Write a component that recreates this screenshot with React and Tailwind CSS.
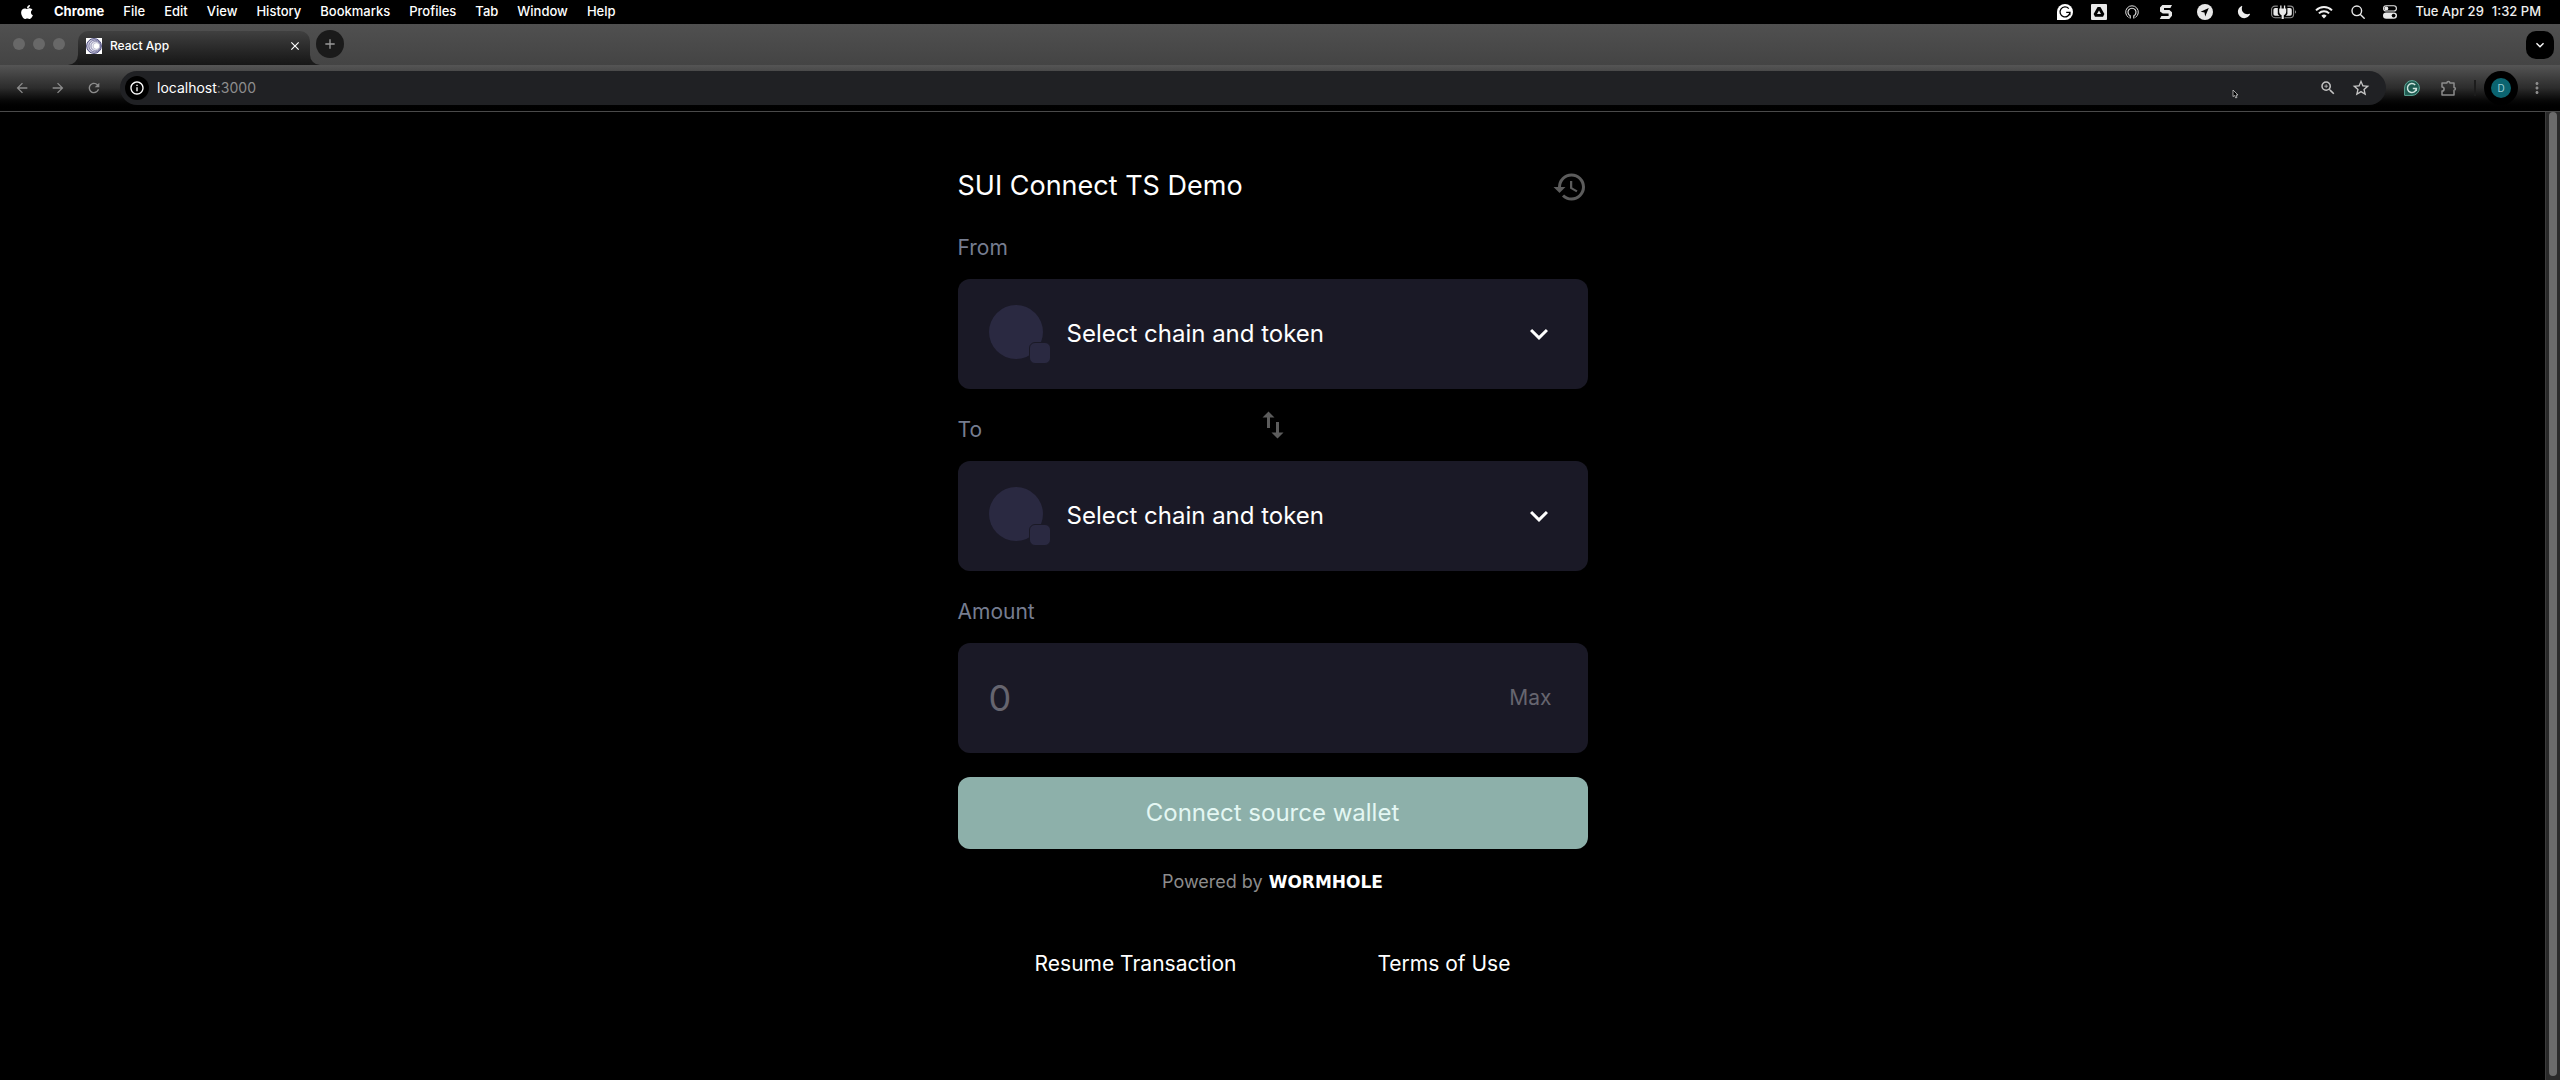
import React, { useState } from 'react';
import { FaApple } from 'react-icons/fa';
import { IoMoon } from 'react-icons/io5';
import {
    MdArrowBack,
    MdArrowForward,
    MdClose,
    MdAdd,
    MdExpandMore,
    MdHistory,
    MdMoreVert,
    MdOutlineInfo,
    MdRefresh,
    MdStarOutline,
    MdSwapVert,
    MdZoomIn,
} from 'react-icons/md';

const menuItems = ['File', 'Edit', 'View', 'History', 'Bookmarks', 'Profiles', 'Tab', 'Window', 'Help'];

const GrammarlyIcon = () => (
    <svg viewBox="0 0 16 16" className="size-4">
        <path d="M8 0a8 8 0 1 1 0 16H0V8a8 8 0 0 1 8-8z" fill="#fff" />
        <path d="M11.8 4.6A5 5 0 1 0 13 8.4H9.2M13 8.4l-.2 2.8" fill="none" stroke="#000" strokeWidth="1.3" />
    </svg>
);

const DriveIcon = () => (
    <svg viewBox="0 0 16 16" className="size-4">
        <rect width="16" height="16" rx="1" fill="#e8e8e8" />
        <path d="M6.6 3h2.8l4 7-1.4 2.8H4L2.6 10z" fill="#000" strokeLinejoin="round" />
        <path d="M8 6.4l2 3.6H6z" fill="#e8e8e8" />
    </svg>
);

const AirdropIcon = () => (
    <svg viewBox="0 0 14 14" className="size-3.5" fill="none" stroke="#dcdcdc">
        <path d="M3.6 12.4a6.3 6.3 0 1 1 6.8 0" strokeWidth="1" />
        <path d="M5.2 13.4v-2.6a4 4 0 1 1 3.6 0v2.6" strokeWidth="1.2" />
    </svg>
);

const SnagIcon = () => (
    <svg viewBox="0 0 14 16" className="h-4 w-3.5">
        <path d="M3.4 1H13l-1.6 3H5v2h5.4L13 8.2v3.6L10.2 15H.8l1.6-3H9.6V9.6H3.8L1 7.4V3.6z" fill="#e8e8e8" />
    </svg>
);

const PlaneIcon = () => (
    <svg viewBox="0 0 16 16" className="size-4">
        <circle cx="8" cy="8" r="8" fill="#e8e8e8" />
        <path d="M11.8 4L3.6 7.8l3.9.7.7 3.9z" fill="#000" />
    </svg>
);

const BatteryIcon = () => (
    <svg viewBox="0 0 26 14" className="h-3.5 w-[26px]">
        <rect x=".6" y="1.1" width="22" height="11.6" rx="3.4" fill="none" stroke="#8a8a8a" strokeWidth="1.1" />
        <path d="M24 5.2c1.4.4 1.4 3 0 3.4z" fill="#8a8a8a" />
        <rect x="2.4" y="3" width="18.4" height="7.8" rx="1.8" fill="#e8e8e8" />
        <path d="M6.8 0h9.6v9l-3 3.4v1.6H9.8v-1.6l-3-3.4z" fill="#000" />
        <path d="M9.2.6h1.3v3h2.4v-3h1.3v3h1v3.2c0 2-1.4 3-2.4 3.4V14h-2.2v-3.8c-1-.4-2.4-1.4-2.4-3.4V3.6h1z" fill="#e8e8e8" />
    </svg>
);

const WifiIcon = () => (
    <svg viewBox="0 0 18 14" className="h-3.5 w-[18px]" fill="none" stroke="#f0f0f0" strokeWidth="2">
        <path d="M1 5.4a11.4 11.4 0 0 1 16 0" />
        <path d="M3.9 8.4a7.2 7.2 0 0 1 10.2 0" />
        <path d="M9 13.4L6.4 10.8a3.6 3.6 0 0 1 5.2 0z" fill="#f0f0f0" stroke="none" />
    </svg>
);

const SearchIcon = () => (
    <svg viewBox="0 0 14 14" className="size-3.5" fill="none" stroke="#e8e8e8" strokeWidth="1.4" strokeLinecap="round">
        <circle cx="5.8" cy="5.8" r="4.8" />
        <path d="M9.4 9.4l3.8 3.8" />
    </svg>
);

const ControlCenterIcon = () => (
    <svg viewBox="0 0 14 14" className="size-3.5">
        <rect x=".6" y=".8" width="12.8" height="5.2" rx="2.6" fill="none" stroke="#e8e8e8" strokeWidth="1.1" />
        <circle cx="3.4" cy="3.4" r="1.9" fill="#e8e8e8" />
        <rect x="0" y="7.4" width="14" height="6.4" rx="3.2" fill="#e8e8e8" />
        <circle cx="10.6" cy="10.6" r="1.9" fill="#000" />
    </svg>
);

const Favicon = () => (
    <svg viewBox="0 0 16 16" className="size-4" fill="none" stroke="#4b4a7d">
        <rect width="16" height="16" fill="#fff" stroke="none" />
        <circle cx="8" cy="8" r="7.4" fill="#c9c8dc" strokeWidth="1" />
        <circle cx="8.8" cy="8" r="5.9" fill="#dddcea" strokeWidth=".6" />
        <circle cx="9.6" cy="8" r="4.6" fill="#eeeef5" strokeWidth=".5" />
        <circle cx="10.4" cy="8" r="3.3" fill="#fff" strokeWidth=".3" />
    </svg>
);

const GrammarlyExtIcon = () => (
    <svg viewBox="0 0 16 16" className="size-4" fill="none">
        <path d="M8 .6a7.4 7.4 0 1 1 0 14.8H.6V8A7.4 7.4 0 0 1 8 .6z" fill="#1d5a50" stroke="#5fa898" strokeWidth="1" />
        <path d="M11.2 5A4.5 4.5 0 1 0 12.4 8.6H8.8M12.4 8.4l-.2 2.6" stroke="#cfe5df" strokeWidth="1.5" />
    </svg>
);

const PuzzleIcon = () => (
    <svg viewBox="0 0 16 16" className="size-4" fill="none" stroke="#8c8c8c" strokeWidth="1.5" strokeLinejoin="round">
        <path d="M1 3h4.9a1.5 1.5 0 0 1 3 0H13v4.4a1.4 1.4 0 0 1 0 2.8V15H1v-3.9a2.1 2.1 0 0 0 0-4.2z" />
    </svg>
);

const PointerIcon = () => (
    <svg viewBox="0 0 7 10" className="absolute bottom-[6px] right-[147px] h-2.5 w-[7px]">
        <path d="M1 1v6.6l1.6-1.2L3.8 9l1.2-.6-1-2.4h2z" fill="#000" stroke="#c8c8c8" strokeWidth=".8" />
    </svg>
);

const MenuBar = () => (
    <header className="flex h-6 items-center justify-between bg-black px-[19px] text-[13px] font-medium text-white">
        <nav className="flex items-center gap-[19px]">
            <FaApple className="size-4" />
            <span className="font-bold">Chrome</span>
            {menuItems.map((item) => (
                <span key={item}>{item}</span>
            ))}
        </nav>
        <div className="flex items-center text-[#eee]">
            <div className="mr-[18px] flex items-center gap-5">
                <div className="flex items-center gap-[18px]">
                    <GrammarlyIcon />
                    <DriveIcon />
                    <AirdropIcon />
                </div>
                <div className="flex items-center gap-6">
                    <SnagIcon />
                    <PlaneIcon />
                    <IoMoon className="size-3.5" />
                </div>
                <div className="flex items-center gap-[18px]">
                    <BatteryIcon />
                    <WifiIcon />
                    <SearchIcon />
                    <ControlCenterIcon />
                </div>
            </div>
            <span className="mr-2">Tue Apr 29</span>
            <span>1:32 PM</span>
        </div>
    </header>
);

const TabStrip = () => (
    <div className="flex h-[41px] items-end justify-between bg-linear-to-b from-[#505050] to-[#444] pr-1.5">
        <div className="flex items-end">
            <div className="mb-[15px] ml-[13px] mr-[3px] flex gap-2">
                <span className="size-3 rounded-full bg-[#686868]" />
                <span className="size-3 rounded-full bg-[#686868]" />
                <span className="size-3 rounded-full bg-[#686868]" />
            </div>
            <svg viewBox="0 0 10 10" className="size-2.5">
                <path d="M10 0v10H0A10 10 0 0 0 10 0z" fill="#1a1a1a" />
            </svg>
            <div className="flex h-[34px] w-[232px] items-center rounded-t-[10px] bg-linear-to-b from-[#404040] to-[#161616] px-2 pb-2 pt-1">
                <Favicon />
                <span className="ml-2 flex-1 text-xs font-medium text-white">React App</span>
                <button type="button" aria-label="Close tab" className="text-white">
                    <MdClose className="size-3.5" />
                </button>
            </div>
            <svg viewBox="0 0 10 10" className="size-2.5">
                <path d="M0 0v10h10A10 10 0 0 1 0 0z" fill="#1a1a1a" />
            </svg>
            <button type="button" aria-label="New tab" className="-ml-1 mb-[7px] flex size-7 items-center justify-center rounded-full bg-[#1a1a1a] text-[#9a9a9a]">
                <MdAdd className="size-4" />
            </button>
        </div>
        <button type="button" aria-label="Search tabs" className="mb-1.5 flex size-7 items-center justify-center rounded-[10px] bg-black text-white">
            <MdExpandMore className="size-4" />
        </button>
    </div>
);

const Toolbar = () => (
    <div className="flex h-[47px] items-start border-b border-[#4a4a4a] bg-linear-to-b from-[#555] via-[#2c2c2c] via-50% to-black px-3.5 pt-1.5">
        <div className="mr-[18px] flex h-[34px] items-center gap-5 text-[#8c8c8c]">
            <button type="button" aria-label="Back"><MdArrowBack className="size-4" /></button>
            <button type="button" aria-label="Forward"><MdArrowForward className="size-4" /></button>
            <button type="button" aria-label="Reload"><MdRefresh className="size-4" /></button>
        </div>
        <div className="relative flex h-[34px] flex-1 items-center rounded-full bg-[#202124] pl-[5px] pr-[15px]">
            <button type="button" aria-label="Site information" className="flex size-6 items-center justify-center rounded-full bg-black text-white">
                <MdOutlineInfo className="size-4" />
            </button>
            <p className="ml-2 flex-1 text-sm text-[#8e8e8e]">
                <span className="text-white">localhost</span>:3000
            </p>
            <div className="flex items-center gap-3.5 text-[#c4c4c4]">
                <button type="button" aria-label="Zoom"><MdZoomIn className="size-[18px]" /></button>
                <button type="button" aria-label="Bookmark this tab"><MdStarOutline className="size-5" /></button>
            </div>
            <PointerIcon />
        </div>
        <div className="ml-[18px] flex h-[34px] items-center">
            <GrammarlyExtIcon />
            <button type="button" aria-label="Extensions" className="ml-[21px]"><PuzzleIcon /></button>
            <span className="ml-[17px] h-4 w-0.5 bg-[#1c1c1c]" />
            <button type="button" className="ml-2 flex size-[34px] items-center justify-center rounded-full bg-black">
                <span className="flex size-5 items-center justify-center rounded-full bg-[#0b6470] text-[10px] text-[#9fd0d6]">D</span>
            </button>
            <button type="button" aria-label="Menu" className="ml-2.5 text-[#8c8c8c]"><MdMoreVert className="size-[18px]" /></button>
        </div>
    </div>
);

const AssetPicker = ({ label }) => (
    <button type="button" aria-label={`${label}: Select chain and token`} className="flex h-[110px] w-full items-center rounded-xl bg-[#1a1926] px-[31px] text-left">
        <span className="relative mb-1 size-[54px] rounded-full bg-[#2a2941]">
            <span className="absolute -bottom-[5px] -right-2 size-[22px] rounded-md border border-[#1a1926] bg-[#2a2941]" />
        </span>
        <span className="ml-6 flex-1 text-2xl text-white">Select chain and token</span>
        <MdExpandMore className="size-9 text-white" />
    </button>
);

const App = () => {
    const [amount, setAmount] = useState('');

    return (
        <div className="flex min-h-screen flex-col bg-black font-['Inter',sans-serif]">
            <MenuBar />
            <TabStrip />
            <Toolbar />

            <div className="flex flex-1">
                <div className="flex flex-1 justify-center px-4 pb-10 pt-[54px]">
                    <main className="w-full max-w-[630px]">
                        <div className="flex h-[41px] items-center justify-between">
                            <h1 className="text-[27px] text-white">SUI Connect TS Demo</h1>
                            <button type="button" aria-label="Transaction history" className="text-[#5c5c5c]">
                                <MdHistory className="size-9" />
                            </button>
                        </div>

                        <h2 className="mb-[15px] mt-[25px] text-[21px] leading-8 text-[#767d90]">From</h2>
                        <AssetPicker label="From" />

                        <div className="mb-[15px] mt-[25px] grid grid-cols-3 grid-rows-[32px]">
                            <h2 className="text-[21px] leading-8 text-[#767d90]">To</h2>
                            <button type="button" aria-label="Swap chains" className="flex h-[22px] items-center justify-self-center text-[#5c5c5c]">
                                <MdSwapVert className="size-9" />
                            </button>
                        </div>
                        <AssetPicker label="To" />

                        <label htmlFor="amount" className="mb-[15px] mt-[25px] block text-[21px] leading-8 text-[#767d90]">Amount</label>
                        <div className="flex h-[110px] items-center rounded-xl bg-[#1a1926] pl-[31px] pr-9">
                            <input
                                id="amount"
                                type="text"
                                inputMode="decimal"
                                placeholder="0"
                                value={amount}
                                onChange={(e) => setAmount(e.target.value)}
                                className="min-w-0 flex-1 bg-transparent text-4xl text-white outline-none placeholder:text-[#66656f]"
                            />
                            <button type="button" className="text-[21px] text-[#66656f]">Max</button>
                        </div>

                        <button type="button" className="mt-6 h-[72px] w-full rounded-xl bg-[#8db0aa] text-2xl text-[#e4f7f3]">
                            Connect source wallet
                        </button>

                        <div className="mt-5 flex h-[26px] items-center justify-center gap-1.5 text-lg text-[#8c8c8c]">
                            Powered by
                            <span className="font-['DejaVu_Sans',sans-serif] text-[17px] font-bold text-white">WORMHOLE</span>
                        </div>

                        <div className="mt-[53px] flex justify-center gap-[141px] text-[21px] leading-8 text-white">
                            <a href="#resume">Resume Transaction</a>
                            <a href="#terms">Terms of Use</a>
                        </div>
                    </main>
                </div>

                {/* scrollbar */}
                <div className="flex w-[15px] justify-center border-l border-[#3c3c3c] bg-[#2a2a2a] pb-1">
                    <div className="w-2 rounded-full bg-[#6b6b6b]" />
                </div>
            </div>
        </div>
    );
};

export default App;
